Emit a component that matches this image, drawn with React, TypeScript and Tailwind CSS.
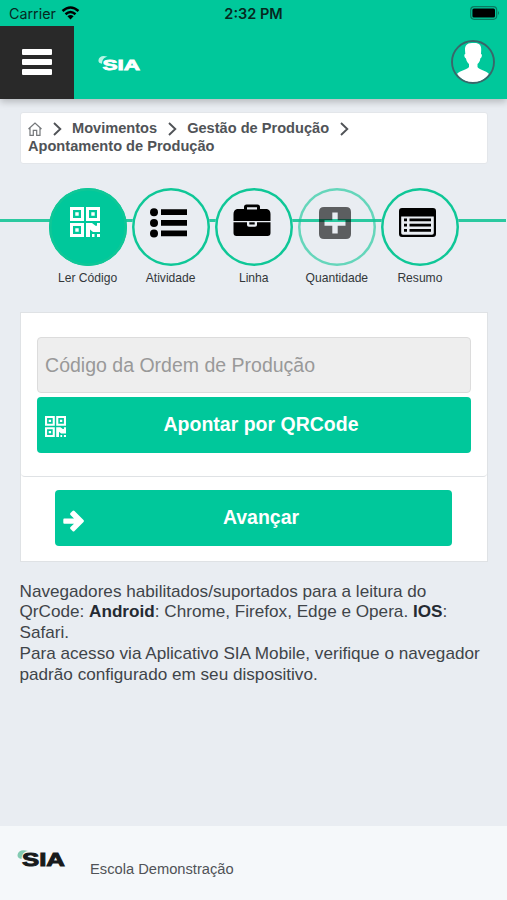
import type { ReactNode } from "react";

function Logo({ color, swoosh, className }: { color: string; swoosh: string; className: string }) {
  return (
    <svg viewBox="0 0 48 24" className={`overflow-visible ${className}`} aria-label="SIA">
      <path d="M0.5 6C1 2 5 0 11 2C7 2.5 5 5 4.5 10C2 9.5 0.3 8.5 0.5 6Z" fill={swoosh} />
      <text
        x="5"
        y="17.3"
        fontFamily="Liberation Sans, sans-serif"
        fontWeight="700"
        fontSize="17.5"
        textLength="43"
        lengthAdjust="spacingAndGlyphs"
        fill={color}
        stroke={color}
        strokeWidth="0.9"
      >
        SIA
      </text>
    </svg>
  );
}

function QrIcon({ className }: { className: string }) {
  return (
    <svg viewBox="0 0 30 30" className={className} fill="currentColor">
      <path
        fillRule="evenodd"
        d="M0 0H14V14H0ZM3 3V11H11V3ZM5.3 5.3H8.7V8.7H5.3ZM16 0H30V14H16ZM19 3V11H27V3ZM21.3 5.3H24.7V8.7H21.3ZM0 16H14V30H0ZM3 19V27H11V19ZM5.3 21.3H8.7V24.7H5.3ZM16 16H22L25.5 18.7H27V16H30V25H23L20 22.5V30H16ZM22 27H24.5V30H22ZM27 27H30V30H27Z"
      />
    </svg>
  );
}

function ListIcon() {
  return (
    <svg viewBox="0 0 37 30" className="h-[30px] w-[37px]">
      <circle cx="4" cy="4.3" r="4" />
      <circle cx="4" cy="15" r="4" />
      <circle cx="4" cy="25.5" r="4" />
      <path d="M11 1.3H37V7H11ZM11 12H37V17.7H11ZM11 22.5H37V28.2H11Z" />
    </svg>
  );
}

function BriefcaseIcon() {
  return (
    <svg viewBox="0 0 38 33" className="mb-[5px] h-[33px] w-[38px]">
      <path
        fillRule="evenodd"
        d="M11 5V3Q11 0.5 13.5 0.5H24.5Q27 0.5 27 3V5H34Q37.5 6 37.5 10V17H0.5V10Q0.5 6 4 5ZM14 5.4H24V3.2H14Z"
      />
      <path d="M0.5 18.3H14V21Q14 22.8 16 22.8H22Q24 22.8 24 21V18.3H37.5V29Q37.5 32 34.5 32H3.5Q0.5 32 0.5 29Z" />
      <path d="M16.3 18.3H21.7V20.5H16.3Z" />
    </svg>
  );
}

function PlusIcon() {
  return (
    <svg viewBox="0 0 32 32" className="h-8 w-8">
      <path
        fillRule="evenodd"
        d="M5 0H27Q32 0 32 5V27Q32 32 27 32H5Q0 32 0 27V5Q0 0 5 0ZM13.3 5.5V13.3H5.5V18.7H13.3V26.5H18.7V18.7H26.5V13.3H18.7V5.5Z"
      />
    </svg>
  );
}

function SummaryIcon() {
  return (
    <svg viewBox="0 0 37 29" className="mb-[2px] h-[29px] w-[37px]">
      <path
        fillRule="evenodd"
        d="M3 0H34Q37 0 37 3V26Q37 29 34 29H3Q0 29 0 26V3Q0 0 3 0ZM2.2 8.5V25Q2.2 26.8 4 26.8H33Q34.8 26.8 34.8 25V8.5Z"
      />
      <path d="M5 10.5H8V13.2H5ZM10.5 10.5H32V13.2H10.5ZM5 15.7H8V18.4H5ZM10.5 15.7H32V18.4H10.5ZM5 21H8V23.7H5ZM10.5 21H32V23.7H10.5Z" />
    </svg>
  );
}

function Chevron({ className }: { className: string }) {
  return (
    <svg viewBox="0 0 9 14" className={`inline-block h-[14px] w-[9px] ${className}`}>
      <path d="M1 1L7.3 7L1 13" fill="none" stroke="#505357" strokeWidth="1.9" />
    </svg>
  );
}

function Step({ label, active, faded, children }: { label: string; active?: boolean; faded?: boolean; children: ReactNode }) {
  return (
    <div className="flex w-[83.1px] flex-col items-center">
      <div
        className={`flex h-[78px] w-[78px] justify-center rounded-full pr-[4px] pt-[2px] shadow-[inset_0_0_0_2.5px_#0fc797] ${
          active ? "bg-[#00c89b] text-white" : faded ? "text-black opacity-60" : "bg-[#e9edf2] text-black"
        }`}
      >
        <div className="flex h-[66px] items-center">{children}</div>
      </div>
      <span className="mt-[5px] text-[12.1px] leading-[14px] text-[#33373a]">{label}</span>
    </div>
  );
}

export default function App() {
  return (
    <div className="flex h-[900px] w-[507px] flex-col overflow-hidden bg-[#e9edf2] font-['Liberation_Sans',Arial,sans-serif] text-[#3f4449]">
      <div className="relative z-10 h-[98.5px] shrink-0 bg-[#00c89b] shadow-[0_3px_7px_rgba(0,0,0,0.22)]">
        <div className="flex h-[25.5px] items-center justify-between pl-[9px] pr-[7px] font-[Inter,sans-serif] text-[#06281f]">
          <div className="flex w-[100px] items-center gap-[5px]">
            <span className="mt-[2px] text-[14.3px]">Carrier</span>
            <svg viewBox="0 0 18 14" className="h-[14px] w-[19px]" fill="none" stroke="#000" strokeWidth="2.5">
              <path d="M1 5Q9 -2 17 5M4 8.2Q9 3.7 14 8.2" />
              <path d="M9 13.5L5.9 10.3Q9 7.8 12.1 10.3Z" fill="#000" stroke="none" />
            </svg>
          </div>
          <span className="mr-[2px] mt-[2px] text-[14.5px] font-semibold">2:32 PM</span>
          <div className="flex w-[100px] justify-end">
            <svg viewBox="0 0 30 14" className="h-[14px] w-[30px]">
              <rect x="0.7" y="0.7" width="26" height="12.6" rx="3.5" fill="none" stroke="#087b61" strokeWidth="1.2" />
              <rect x="2.4" y="2.6" width="22.6" height="8.8" rx="1.5" />
              <path d="M28 5Q30 7 28 9Z" fill="#087b61" />
            </svg>
          </div>
        </div>
        <div className="flex h-[73px] items-center">
          <div className="flex h-full w-[74px] flex-col items-center justify-center gap-[4.5px] bg-[#292929]">
            <span className="h-[5.5px] w-[30px] rounded-[1px] bg-white" />
            <span className="h-[5.5px] w-[30px] rounded-[1px] bg-white" />
            <span className="h-[5.5px] w-[30px] rounded-[1px] bg-white" />
          </div>
          <Logo color="#ffffff" swoosh="#b7f5e4" className="ml-[24px] mt-[6px] h-[21px] w-[42px]" />
          <svg viewBox="0 0 44 44" className="ml-auto mr-[12px] h-[44px] w-[44px]">
            <path
              d="M22 3C16 2.5 13.8 5.5 14 10L14.3 14C12.7 14 13.3 17.5 15 18.5C15.5 21.5 16.5 22.5 18 24V27C16 30 9 30.5 6 34C10 39.5 15.5 42.5 22 42.5S34 39.5 38 34C35 30.5 28 30 26.5 27V24C28 22.5 29 21.5 29.3 18.5C31 17.5 31.5 14 30 14L30.2 10C30.5 5 28 2.5 22 3Z"
              fill="#fff"
            />
            <circle cx="22" cy="22" r="21" fill="none" stroke="#39676a" strokeWidth="1.9" />
          </svg>
        </div>
      </div>

      <nav className="ml-[20px] mr-[19px] mt-[13.5px] h-[52px] shrink-0 rounded-[3px] border border-[#e3e6ea] bg-white pl-[7px] pt-[5.5px] text-[14.6px] font-bold leading-[18.5px] text-[#505357]">
        <div className="flex h-[18.5px] items-center whitespace-nowrap">
          <svg viewBox="0 0 14 14" className="mt-[3px] h-[14px] w-[14px]" fill="none" stroke="#74777a" strokeWidth="1.2">
            <path d="M0.5 7L7 1L13.5 7M2 6V13.3H5.3V8.3H8.7V13.3H12V6" />
          </svg>
          <Chevron className="ml-[11px] mt-[3px]" />
          <span className="ml-[10px]">Movimentos</span>
          <Chevron className="ml-[11px] mt-[3px]" />
          <span className="ml-[10px]">Gestão de Produção</span>
          <Chevron className="ml-[11px] mt-[3px]" />
        </div>
        <div>Apontamento de Produção</div>
      </nav>

      <div className="relative mt-[24px] h-[98px] shrink-0">
        <div className="absolute left-0 top-[31px] h-[3px] w-[506px] bg-[#2bc9a0]" />
        <div className="relative ml-[46px] flex">
          <Step label="Ler Código" active>
            <QrIcon className="mb-[3px] mr-[1px] h-[30px] w-[30px]" />
          </Step>
          <Step label="Atividade">
            <ListIcon />
          </Step>
          <Step label="Linha">
            <BriefcaseIcon />
          </Step>
          <Step label="Quantidade" faded>
            <PlusIcon />
          </Step>
          <Step label="Resumo">
            <SummaryIcon />
          </Step>
        </div>
      </div>

      <main className="ml-[20px] mr-[19px] mt-[26px] h-[250px] shrink-0 border border-[#dfe2e5] bg-white">
        <div className="h-[163.5px] rounded-b-[4px] border-b border-[#dfe2e5] px-[15.6px] pt-[24px]">
          <input
            readOnly
            placeholder="Código da Ordem de Produção"
            className="block h-[56px] w-full rounded-[4px] border border-[#dcdcdc] bg-[#eeeeee] px-[7.5px] text-[19.5px] outline-none placeholder:text-[#999999] placeholder:opacity-100"
          />
          <button className="mt-[4px] flex h-[56px] w-full items-center rounded-[4px] bg-[#00c89b] pl-[8px] pr-[8px] text-white">
            <QrIcon className="mt-[3px] h-[21px] w-[21px]" />
            <span className="-mt-[1px] flex-1 pr-[7px] text-center text-[19.5px] font-bold">Apontar por QRCode</span>
          </button>
        </div>
        <button className="ml-[34px] mt-[13px] flex h-[56px] w-[397px] items-center rounded-[4px] bg-[#00c89b] pl-[8px] text-white">
          <svg viewBox="0 0 22 22" className="mt-[6px] h-[22px] w-[22px]">
            <path
              d="M1.2 8.5H11L7.5 5Q6.5 4 7.5 3L9.5 1Q10.5 0 11.5 1L20.5 10Q21.5 11 20.5 12L11.5 21Q10.5 22 9.5 21L7.5 19Q6.5 18 7.5 17L11 13.7H1.2Q0.3 13.7 0.3 12.5V9.7Q0.3 8.5 1.2 8.5Z"
              fill="white"
            />
          </svg>
          <span className="flex-1 pr-[15px] text-center text-[19.5px] font-bold">Avançar</span>
        </button>
      </main>

      <p className="ml-[19.5px] mt-[18.5px] whitespace-nowrap text-[17.15px] leading-[20.8px]">
        Navegadores habilitados/suportados para a leitura do
        <br />
        QrCode: <b className="text-[#252a32]">Android</b>: Chrome, Firefox, Edge e Opera. <b className="text-[#252a32]">IOS</b>:
        <br />
        Safari.
        <br />
        Para acesso via Aplicativo SIA Mobile, verifique o navegador
        <br />
        padrão configurado em seu dispositivo.
      </p>

      <footer className="mt-auto flex h-[74px] shrink-0 items-start bg-[#f5f8fa] pl-[17px]">
        <Logo color="#181b1c" swoosh="#83cbb2" className="mt-[22.5px] h-[24px] w-[48px]" />
        <span className="ml-[25px] mt-[33px] text-[14.7px] leading-[20px] text-[#505357]">Escola Demonstração</span>
      </footer>
    </div>
  );
}
